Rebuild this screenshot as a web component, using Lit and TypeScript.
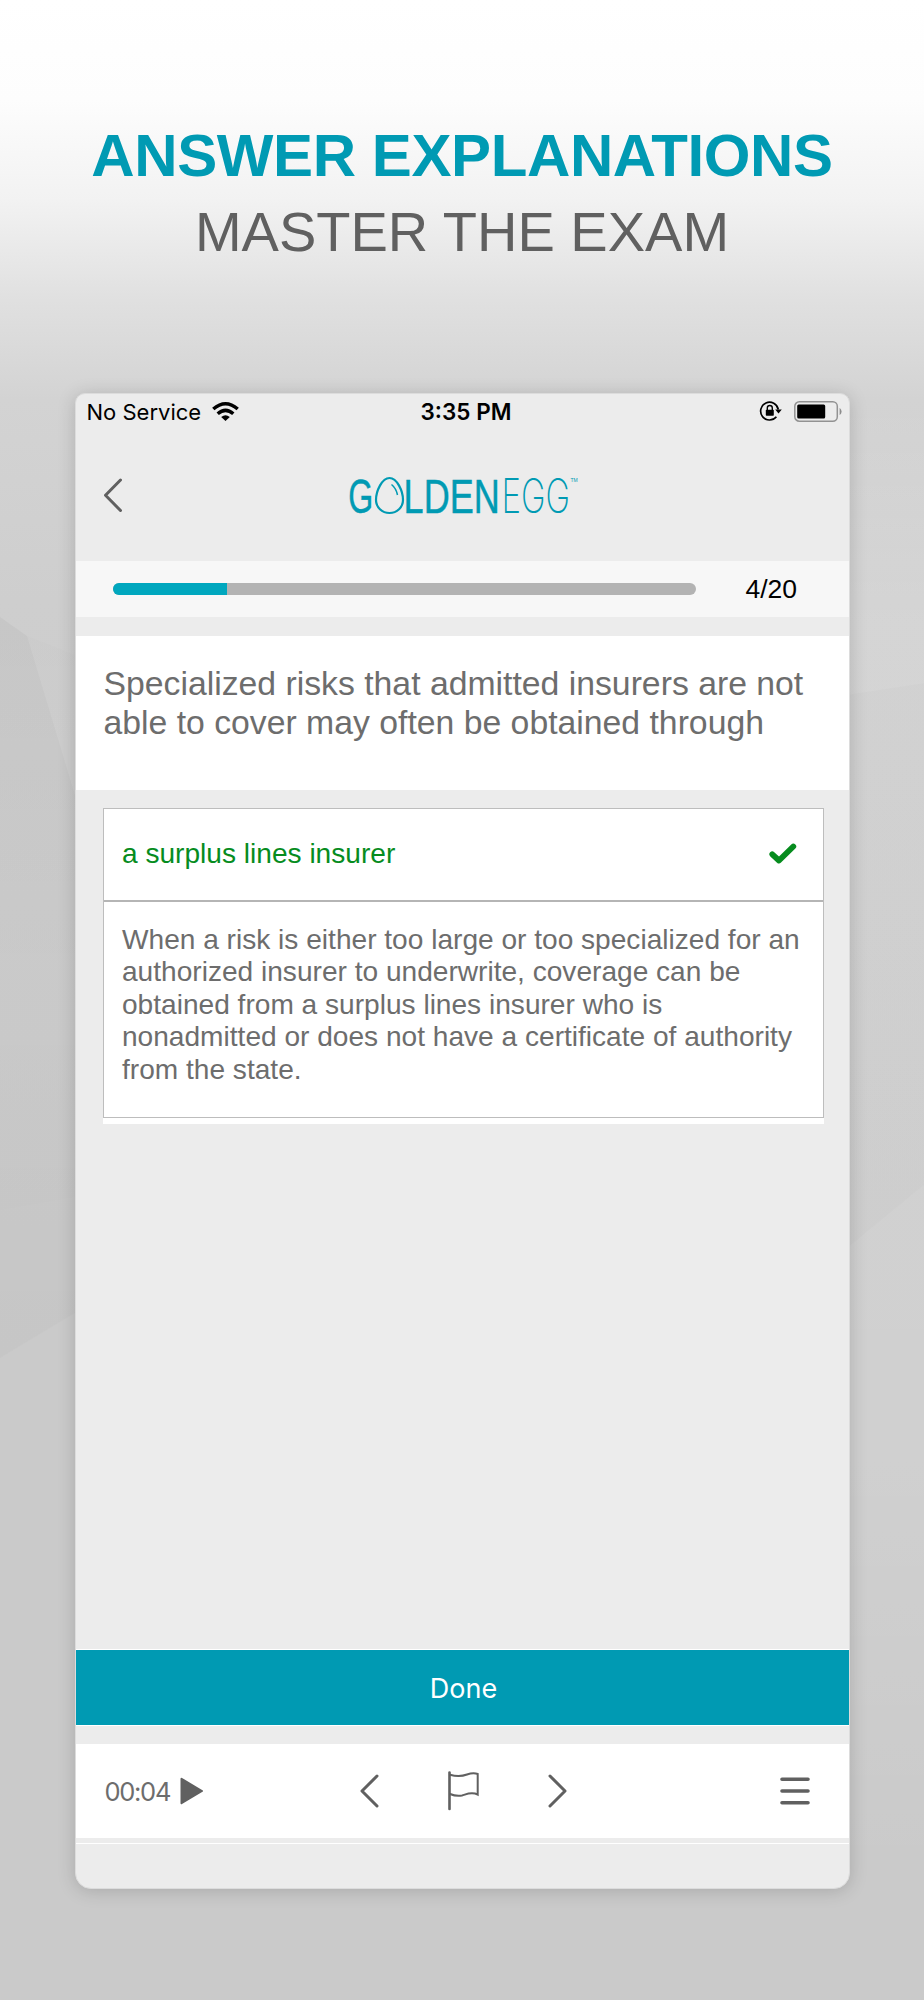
import { LitElement, html, css } from "lit";
import { customElement } from "lit/decorators.js";

@customElement("app-root")
export class AppRoot extends LitElement {
  static styles = css`
    :host { display: block; width: 924px; height: 2000px; overflow: hidden;
      font-family: "Liberation Sans", Arial, sans-serif; color: #6d6d6d; }
    * { box-sizing: border-box; }
    svg { display: block; overflow: visible; flex: none; }
    .page { display: grid; grid-template: 2000px / 924px; }
    .backdrop, .content { grid-area: 1 / 1; }
    .content { display: flex; flex-direction: column; align-items: center; z-index: 1; }
    .titles { height: 393px; padding-top: 121px; text-align: center; white-space: nowrap; }
    h1 { margin: 0; font-size: 60px; line-height: 70px; letter-spacing: -.4px; color: #009ab3; }
    h2 { margin: 5px 0 0; font-size: 56px; line-height: 72px; font-weight: 400; color: #606060; }
    .phone { width: 775px; height: 1496px; border: 1px solid #dcdcdc; border-radius: 10px 10px 16px 16px;
      background: #ececec; box-shadow: 0 2px 18px rgba(0,0,0,.17); overflow: hidden; display: flex; flex-direction: column; }
    .status { height: 36px; display: grid; grid-template-columns: 1fr auto 1fr; align-items: center; padding: 0 7px 0 11px;
      font: 400 22px/36px Inter, sans-serif; color: #000; }
    .left, .right { display: flex; align-items: center; }
    .left { gap: 11px; }
    .right { justify-content: flex-end; gap: 12px; padding-bottom: 2px; }
    .clock { font-weight: 600; font-size: 22.5px; padding-left: 4px; }
    .nav { height: 131px; display: flex; align-items: flex-start; padding: 47px 0 0 27px; }
    .logo { margin: -1px 0 0 228px; }
    .wide { font-size: 49px; stroke: #009ab3; stroke-width: .5; }
    .thin { font: 200 48px Inter, sans-serif; }
    .progress { height: 56px; background: #f7f7f7; display: flex; align-items: center; padding-left: 37px; font-size: 26.5px; color: #000; }
    .track { width: 583px; height: 12px; border-radius: 6px; background: #b3b3b3; overflow: hidden; }
    .fill { height: 100%; background: #00a7be; }
    .count { margin: 1px 0 0 50px; }
    .question { margin-top: 19px; height: 154px; padding: 28px 0 0 28px; background: #fff; font-size: 33.75px; line-height: 39px; white-space: pre-line; }
    .answers { margin: 18px 25px 0 27.5px; background: #fff; padding-bottom: 6px; }
    .box { border: 1px solid #bdbdbd; height: 310px; font-size: 28.1px; }
    .answer { height: 93px; border-bottom: 2px solid #b5b5b5; display: flex; align-items: center; justify-content: space-between;
      padding: 0 26px 2px 18px; color: #068c1e; }
    .why { padding: 22px 0 0 18px; line-height: 32.4px; white-space: pre; }
    .spacer { flex: 1; }
    .done { height: 77px; border: solid #fff; border-width: 1px 0; background: #009ab3; color: #fff; display: flex; align-items: center; justify-content: center;
      padding: 2px 0 0 3px; font: 400 27px Inter, sans-serif; }
    .tools { margin-top: 18px; height: 94px; background: #fff; display: flex; align-items: center; padding-left: 29px; }
    .time { font: 400 25.5px Inter, sans-serif; letter-spacing: -1.3px; width: 75px; }
    .prev { margin-left: 156px; }
    .flag, .next { margin-left: 69px; }
    .flag { margin-top: -2px; }
    .menu { margin-left: 213px; }
    .foot { border-top: 1px solid #fff; margin-top: 5px; height: 45px; }
  `;

  render() {
    return html`<div class="page">
      <svg class="backdrop" width="924" height="2000">
        <defs>
          <linearGradient id="bg" x1="0" y1="0" x2="0" y2="1">
            <stop offset="0" stop-color="#fff"/><stop offset=".05" stop-color="#fdfdfd"/>
            <stop offset=".1" stop-color="#f2f2f2"/><stop offset=".15" stop-color="#e0e0e0"/>
            <stop offset=".2" stop-color="#d3d3d3"/><stop offset=".3" stop-color="#cecece"/>
            <stop offset=".6" stop-color="#cacaca"/><stop offset="1" stop-color="#cacaca"/>
          </linearGradient>
          <linearGradient id="side" x1="0" y1="0" x2="0" y2="1">
            <stop offset="0" stop-color="#fff" stop-opacity="0"/><stop offset=".15" stop-color="#fff" stop-opacity=".14"/>
            <stop offset=".7" stop-color="#fff" stop-opacity=".12"/><stop offset="1" stop-color="#fff" stop-opacity="0"/>
          </linearGradient>
          <linearGradient id="shade" x1="0" y1="0" x2="0" y2="1">
            <stop offset="0" stop-color="#000" stop-opacity=".035"/><stop offset=".5" stop-color="#000" stop-opacity=".01"/><stop offset="1" stop-color="#000" stop-opacity=".025"/>
          </linearGradient>
        </defs>
        <rect width="924" height="2000" fill="url(#bg)"/>
        <path d="M840 400H924V1880H840Z" fill="url(#side)"/>
        <path d="M0 617 27 636 80 657V1310L0 1358Z" fill="url(#shade)"/>
        <path d="M27 636 80 657V812Z" fill="#fff" opacity=".1"/>
        <path d="M0 1210 80 1196V1310L0 1358Z" fill="#fff" opacity=".03"/>
        <path d="M845 695 924 683V1185L845 1250Z" fill="#000" opacity=".013"/>
      </svg>
      <div class="content">
        <div class="titles"><h1>ANSWER EXPLANATIONS</h1><h2>MASTER THE EXAM</h2></div>
        <div class="phone">
          <div class="status">
            <div class="left"><span>No Service</span>
              <svg width="27" height="20" viewBox="0 0 27 20"><g fill="none" stroke="#000" stroke-width="3.5"><path d="M1.3 7Q13.5-3.6 25.7 7"/><path d="M5.7 11.8Q13.5 5 21.3 11.8"/></g><path d="M13.5 19 9.2 15Q13.5 11.5 17.8 15Z"/></svg>
            </div>
            <span class="clock">3:35 PM</span>
            <div class="right">
              <svg width="22" height="20" viewBox="0 0 22 20"><path d="M18.3 8.5A8.9 8.9 0 1 0 16.4 15.8" fill="none" stroke="#000" stroke-width="1.7"/><path d="M15.2 8.6h6.6l-3.3 4Z"/><rect x="5.8" y="8.8" width="8" height="6" rx=".7"/><path d="M7.3 9V7a2.5 2.5 0 0 1 5 0v2" fill="none" stroke="#000" stroke-width="1.4"/></svg>
              <svg width="48" height="21" viewBox="0 0 48 21"><rect x=".8" y=".8" width="42.5" height="19.4" rx="4.5" fill="none" stroke="#929292" stroke-width="1.5"/><rect x="3.2" y="3.5" width="28" height="14" rx="1.5"/><path d="M45.6 6.7q4 3.8 0 7.6Z" fill="#8c8c8c"/></svg>
            </div>
          </div>
          <div class="nav">
            <svg width="20" height="36" viewBox="0 0 20 36"><path d="M17.5 3 2.5 18.3 17.5 33.5" fill="none" stroke="#606060" stroke-width="3" stroke-linecap="round" stroke-linejoin="round"/></svg>
            <svg class="logo" width="230" height="40" viewBox="350 476 230 40" fill="#009ab3">
              <text class="wide" transform="translate(347.3 513) scale(.655 1)">G</text>
              <text class="wide" transform="translate(402.6 513) scale(.736 1)">LDEN</text>
              <text class="thin" transform="translate(500.5 513) scale(.69 1)">EGG</text>
              <text x="569.5" y="482" font-size="5">TM</text>
              <g transform="translate(-1)" fill="none" stroke="#009ab3" stroke-width="2.2"><path d="M389.5 478C397 478 403 491 403 500A13.5 13 0 0 1 376 500C376 491 382 478 389.5 478Z"/><path d="M391.5 484.5Q396 488 397.5 495" stroke-width="1.5"/></g>
            </svg>
          </div>
          <div class="progress"><div class="track"><div class="fill" style="width:${(114 / 583) * 100}%"></div></div><span class="count">4/20</span></div>
          <div class="question">Specialized risks that admitted insurers are not
able to cover may often be obtained through</div>
          <div class="answers"><div class="box">
            <div class="answer"><span>a surplus lines insurer</span>
              <svg width="28" height="22" viewBox="0 0 28 22"><path d="M3.3 11.3 10 17.5 24.3 3.5" fill="none" stroke="#068c1e" stroke-width="5.8" stroke-linecap="round" stroke-linejoin="round"/></svg></div>
            <div class="why">When a risk is either too large or too specialized for an
authorized insurer to underwrite, coverage can be
obtained from a surplus lines insurer who is
nonadmitted or does not have a certificate of authority
from the state.</div>
          </div></div>
          <div class="spacer"></div>
          <div class="done">Done</div>
          <div class="tools">
            <span class="time">00:04</span>
            <svg width="24" height="28" viewBox="0 0 24 28"><path d="M1.5 1.8 22 14 1.5 26.2Z" fill="#606060" stroke="#606060" stroke-width="2" stroke-linejoin="round"/></svg>
            <svg class="prev" width="19" height="34" viewBox="0 0 19 34"><path d="M17 2 2 17 17 32" fill="none" stroke="#606060" stroke-width="3" stroke-linecap="round" stroke-linejoin="round"/></svg>
            <svg class="flag" width="31" height="39" viewBox="0 0 31 39"><g fill="none" stroke="#606060" stroke-width="2" stroke-linecap="round"><path d="M1.5 1.5V38" stroke-width="2.6"/><path d="M2 3.8C10 6 15 5 19 3.5S26 1.3 29.7 3V23.5C23 20 18 23.5 14 24.5Q8 25.5 2 23"/></g></svg>
            <svg class="next" width="19" height="34" viewBox="0 0 19 34"><path d="M2 2 17 17 2 32" fill="none" stroke="#606060" stroke-width="3" stroke-linecap="round" stroke-linejoin="round"/></svg>
            <svg class="menu" width="30" height="28" viewBox="0 0 30 28"><path d="M2 2.3H28M2 14H28M2 25.7H28" stroke="#606060" stroke-width="3.6" stroke-linecap="round"/></svg>
          </div>
          <div class="foot"></div>
        </div>
      </div>
    </div>`;
  }
}
